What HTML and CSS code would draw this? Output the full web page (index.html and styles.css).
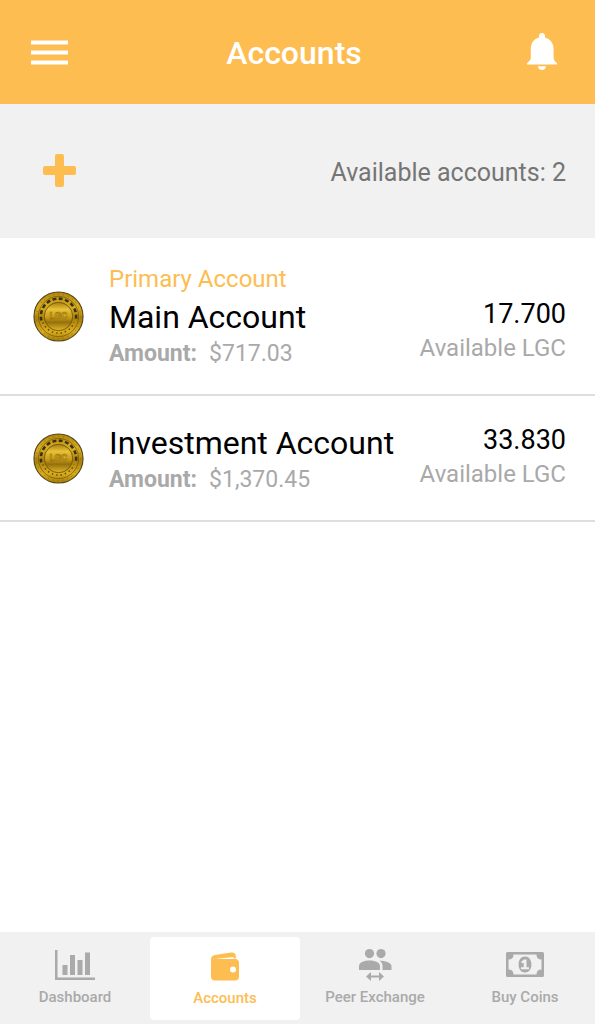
FILE: index.html
```html
<!DOCTYPE html>
<html lang="en">
    <head>
        <meta charset="utf-8">
        <meta name="viewport" content="width=device-width, initial-scale=1">
        <title>Accounts</title>
        <link rel="stylesheet" href="styles.css">
    </head>
    <body>
        <!-- coin artwork shared by every account row -->
        <svg class="defs" width="0" height="0" aria-hidden="true">
            <defs>
                <linearGradient id="gold" x1="0" y1="0" x2="0" y2="1">
                    <stop offset="0" stop-color="#b0850c"/>
                    <stop offset="0.3" stop-color="#dcb022"/>
                    <stop offset="0.55" stop-color="#a9800c"/>
                    <stop offset="0.8" stop-color="#dbae1c"/>
                    <stop offset="1" stop-color="#a57c0a"/>
                </linearGradient>
                <linearGradient id="face" x1="0" y1="0" x2="0" y2="1">
                    <stop offset="0" stop-color="#a47c10"/>
                    <stop offset="0.25" stop-color="#e9c237"/>
                    <stop offset="0.55" stop-color="#c49816"/>
                    <stop offset="0.7" stop-color="#93700c"/>
                    <stop offset="1" stop-color="#e3b726"/>
                </linearGradient>
            </defs>
            <symbol id="coin" viewBox="0 0 52 52">
                <circle cx="26" cy="26" r="25" fill="url(#gold)" stroke="#57491c" stroke-width="1.2"/>
                <circle cx="26" cy="26" r="22.5" fill="none" stroke="#7d610f" stroke-width="0.8" stroke-dasharray="1 4"/>
                <circle cx="26" cy="26" r="20.5" fill="none" stroke="#6d540f" stroke-width="0.7"/>
                <path d="M8.5 30a18 18 0 1 1 35 0" fill="none" stroke="#3a3115" stroke-width="2.6" stroke-dasharray="4 2.5"/>
                <path d="M10 32a17.2 17.2 0 0 0 32 0" fill="none" stroke="#5c490f" stroke-width="1.5" stroke-dasharray="1.5 3"/>
                <circle cx="26" cy="26" r="14.5" fill="url(#face)" stroke="#6d540f" stroke-width="0.9"/>
            </symbol>
        </svg>

        <header class="header">
            <button class="icon-button" type="button" aria-label="Menu">
                <svg width="37" height="26" viewBox="0 0 37 26" fill="currentColor"><path d="M0 1.5h37v4H0zM0 11.5h37v4H0zM0 21.5h37v4H0z"/></svg>
            </button>
            <h1 class="title">Accounts</h1>
            <button class="icon-button bell" type="button" aria-label="Notifications">
                <svg width="30" height="38" viewBox="0 0 30 38" fill="currentColor">
                    <path d="M15 0c1.7 0 3 1.3 3 3v1.4c5.2 1.4 8.600 5.600 8.600 11.600v9c0 2 1.200 3.100 3.400 5.300v1.200H0v-1.200c2.200-2.200 3.800-3.300 3.800-5.300v-9c0-6 3-10.200 8.200-11.600V3c0-1.700 1.300-3 3-3z"/>
                    <path d="M11 33.200h8c0 2.300-1.800 3.900-4 3.900s-4-1.600-4-3.900z"/>
                </svg>
            </button>
        </header>

        <section class="toolbar">
            <button class="icon-button add" type="button" aria-label="Add account">
                <svg width="33" height="33" viewBox="0 0 33 33" fill="currentColor"><path d="M14 0h5q2 0 2 2v10h10q2 0 2 2v5q0 2-2 2H21v10q0 2-2 2h-5q-2 0-2-2V21H2q-2 0-2-2v-5q0-2 2-2h10V2q0-2 2-2z"/></svg>
            </button>
            <p class="count">Available accounts: 2</p>
        </section>

        <main class="accounts">
            <article class="account">
                <svg class="coin" viewBox="0 0 52 52">
                    <use href="#coin" width="52" height="52"/>
                    <text class="coin-text" x="26" y="29" text-anchor="middle">LGC</text>
                </svg>
                <div class="info">
                    <p class="tag">Primary Account</p>
                    <h2 class="name">Main Account</h2>
                    <p class="amount"><b class="label">Amount:</b>$717.03</p>
                </div>
                <div class="balance">
                    <p class="value">17.700</p>
                    <p class="unit">Available LGC</p>
                </div>
            </article>
            <article class="account">
                <svg class="coin" viewBox="0 0 52 52">
                    <use href="#coin" width="52" height="52"/>
                    <text class="coin-text" x="26" y="29" text-anchor="middle">LGC</text>
                </svg>
                <div class="info">
                    <h2 class="name">Investment Account</h2>
                    <p class="amount"><b class="label">Amount:</b>$1,370.45</p>
                </div>
                <div class="balance">
                    <p class="value">33.830</p>
                    <p class="unit">Available LGC</p>
                </div>
            </article>
        </main>

        <nav class="tabs">
            <a class="tab" href="#dashboard">
                <svg width="40" height="32" viewBox="0 0 40 32" fill="currentColor"><path d="M0 1h2.500v27.500H40V31H0zM7.500 16h5v10h-5zM15 6h5v20h-5zM22.500 11h5v15h-5zM30 3.500h5V26h-5z"/></svg>
                Dashboard
            </a>
            <a class="tab active" href="#accounts" aria-current="page">
                <svg width="30" height="32" viewBox="0 0 30 32" fill="currentColor">
                    <path d="M5 9h20q4 0 4 4v13.500q0 4-4 4H5q-4 0-4-4V13q0-4 4-4zm18 7.500a3 3 0 1 0 0 6 3 3 0 0 0 0-6z" fill-rule="evenodd"/>
                    <path d="M1 13V9.500q0-4 4-4.600L21 2.500q4-.500 4.800 3v3.300q-1-.600-2.300-.600V7L4.500 9Q1.500 9.500 1 13z"/>
                </svg>
                Accounts
            </a>
            <a class="tab" href="#exchange">
                <svg width="34" height="32" viewBox="0 0 34 32" fill="currentColor">
                    <circle cx="11.5" cy="4.6" r="4.6"/>
                    <circle cx="23" cy="4.6" r="4.6"/>
                    <path d="M1 21v-4c0-3.600 6-5.400 10.500-5.400S22 13.400 22 17v4z"/>
                    <path d="M21.500 11.800c5 0 12 1.600 12 5.400V21H24.500v-4c0-2.200-1-4-3-5.200z"/>
                    <path d="M8 27.500l5-4.500v3.400h8V23l5 4.500-5 4.500v-3.400h-8V32z"/>
                </svg>
                Peer Exchange
            </a>
            <a class="tab" href="#buy">
                <svg width="38" height="32" viewBox="0 0 38 32" fill="currentColor">
                    <path fill-rule="evenodd" d="M1.500 3h35Q38 3 38 4.500v22q0 1.500-1.500 1.500h-35Q0 28 0 26.500v-22Q0 3 1.500 3zM7.500 5.500q0 5-5 5v10q5 0 5 5h23q0-5 5-5v-10q-5 0-5-5z"/>
                    <path fill-rule="evenodd" d="M19 7.500c4 0 6.400 3.500 6.400 8s-2.400 8-6.400 8-6.400-3.500-6.400-8 2.400-8 6.400-8zM18 10.500l-3 2.600 1.400 1.500 1.300-1v4.600H15v2h8v-2h-2.500v-7.700z"/>
                </svg>
                Buy Coins
            </a>
        </nav>
    </body>
</html>
```
FILE: styles.css
```css
*
{
    box-sizing: border-box;
}
body
{
    margin:0;
    min-height:100vh;
    display:flex;
    flex-direction: column;
    background-color: white;
    font-family: Roboto,"Liberation Sans",sans-serif;
    color:black;
}
h1,h2,p
{
    margin:0;
}
svg
{
    display:block;
}
.defs
{
    position:absolute;
}
.header
{
    height:104px;
    padding:0 38px 0 31px;
    display:grid;
    grid-template-columns: 1fr auto 1fr;
    align-items: center;
    background-color: #fdbd51;
    color:white;
}
.icon-button
{
    padding:0;
    border:none;
    background:none;
    color:inherit;
    justify-self: start;
    cursor:pointer;
}
.bell
{
    justify-self: end;
}
.title
{
    padding-top:2px;
    font-size:32px;
    font-weight:500;
    line-height:40px;
}
.toolbar
{
    height:134px;
    padding:0 29px 2px 43px;
    display:flex;
    justify-content: space-between;
    align-items: center;
    background-color: #f1f1f1;
}
.add
{
    color:#fdbd51;
}
.count
{
    padding-top:6px;
    font-size:25px;
    line-height:32px;
    color:#757575;
}
.accounts
{
    flex:1;
}
.account
{
    padding:25px 29px 25px 33px;
    display:flex;
    align-items: center;
    gap:25px;
    border-bottom:2px solid #dedede;
}
.coin
{
    width:51px;
    height:51px;
    flex:none;
}
.coin-text
{
    font-size:10px;
    font-weight:700;
    fill:#d3a722;
    stroke:#8a680b;
    stroke-width:0.5px;
}
.info
{
    flex:1;
}
.tag
{
    font-size:24px;
    line-height:32px;
    color:#fdbd51;
}
.name
{
    font-size:32px;
    font-weight:400;
    line-height:44px;
}
.amount
{
    font-size:23px;
    line-height:30px;
    color:#a9a9a9;
}
.label
{
    margin-right:12px;
}
.balance
{
    align-self: flex-end;
    padding-bottom:5px;
    text-align:right;
}
.value
{
    font-size:27px;
    line-height:36px;
}
.unit
{
    font-size:24px;
    line-height:32px;
    color:#a9a9a9;
}
.tabs
{
    height:92px;
    padding:5px 0 4px;
    display:grid;
    grid-template-columns: repeat(4,minmax(150px,1fr));
    overflow:hidden;
    background-color: #f1f1f1;
}
.tab
{
    padding-bottom:1px;
    display:flex;
    flex-direction: column;
    justify-content: center;
    align-items: center;
    gap:6px;
    border-radius:4px;
    color:#aaaaaa;
    font-size:15px;
    font-weight:500;
    line-height:20px;
    text-decoration:none;
}
.active
{
    padding-bottom:0;
    background-color: white;
    color:#fdbd51;
}
```
